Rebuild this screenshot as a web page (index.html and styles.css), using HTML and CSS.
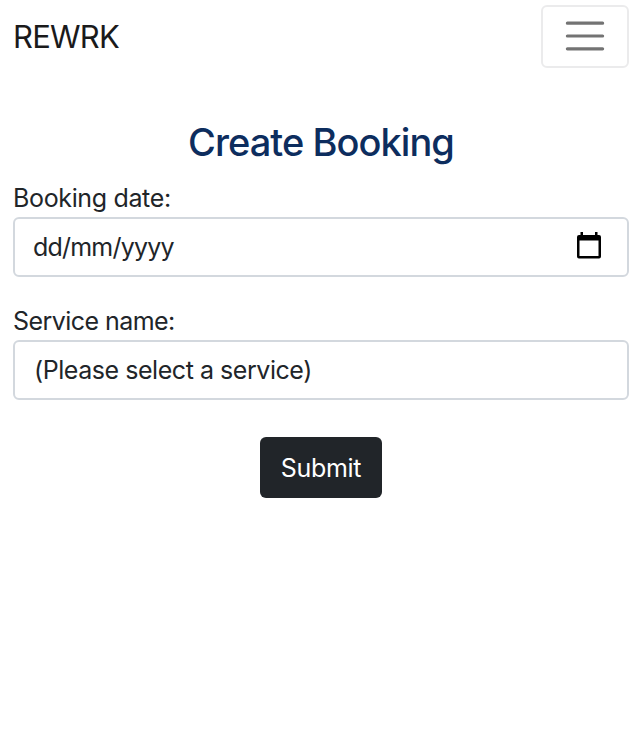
FILE: index.html
```html
<!DOCTYPE html>
<html lang="en">
<head>
<meta charset="utf-8">
<title>REWRK</title>
<link rel="stylesheet" href="styles.css">
</head>
<body>
<nav class="navbar">
  <a class="brand">REWRK</a>
  <button class="toggler" type="button" aria-label="Toggle navigation">
    <svg width="48" height="48" viewBox="0 0 30 30"><path stroke="#000" stroke-opacity=".55" stroke-linecap="round" stroke-miterlimit="10" stroke-width="2" d="M4 7h22M4 15h22M4 23h22"/></svg>
  </button>
</nav>
<main class="content">
  <h1 class="title">Create Booking</h1>
  <form class="form">
    <div class="field">
      <div class="label">Booking date:</div>
      <div class="control date"><span>dd/mm/yyyy</span>
        <svg class="calendar" width="24" height="27" viewBox="0 0 24 27"><path fill="#000" fill-rule="evenodd" d="M3.500 0h2.500v3h12V0h2.500v3h1.500a2 2 0 0 1 2 2v19.500a2 2 0 0 1-2 2H2a2 2 0 0 1-2-2V5a2 2 0 0 1 2-2h1.500zM2.500 8.500V24h19V8.500z"/></svg>
      </div>
    </div>
    <div class="field">
      <div class="label service">Service name:</div>
      <div class="control select"><span>(Please select a service)</span></div>
    </div>
    <button class="submit" type="button">Submit</button>
  </form>
</main>
</body>
</html>
```
FILE: styles.css
```css
* { box-sizing: border-box; }
body { margin: 0; background: #fff; color: #212529; font-family: Inter, "Liberation Sans", sans-serif; font-size: 25px; line-height: 38px; }
.navbar { display: flex; justify-content: space-between; align-items: flex-start; height: 72px; padding: 5px 13px 0; }
.brand { margin-top: 13px; color: #1a1a1b; font-size: 31px; letter-spacing: -0.8px; }
.toggler { display: flex; align-items: center; justify-content: center; width: 88px; height: 63px; padding: 0 0 2px; border: 2px solid #ebebec; border-radius: 6px; background: #fff; }
.content { padding: 0 13px; }
.title { margin: 46px 0 14px; color: #0d2d5e; font-size: 38px; font-weight: 540; line-height: 48px; letter-spacing: -0.95px; text-align: center; }
.field { margin-bottom: 26px; }
.label { height: 37px; line-height: 36px; letter-spacing: -0.35px; }
.service { letter-spacing: -0.55px; }
.control { display: flex; align-items: center; justify-content: space-between; height: 60px; padding: 0 26px 0 19px; border: 2px solid #d3d8de; border-radius: 6px; letter-spacing: -0.45px; }
.date { letter-spacing: -0.8px; padding-left: 18px; }
.calendar { margin-bottom: 3px; }
.submit { display: block; width: 122px; height: 61px; margin: 37px auto 0; padding: 0; border: 0; border-radius: 6px; background: #212529; color: #fff; font: inherit; letter-spacing: -0.3px; }
```
